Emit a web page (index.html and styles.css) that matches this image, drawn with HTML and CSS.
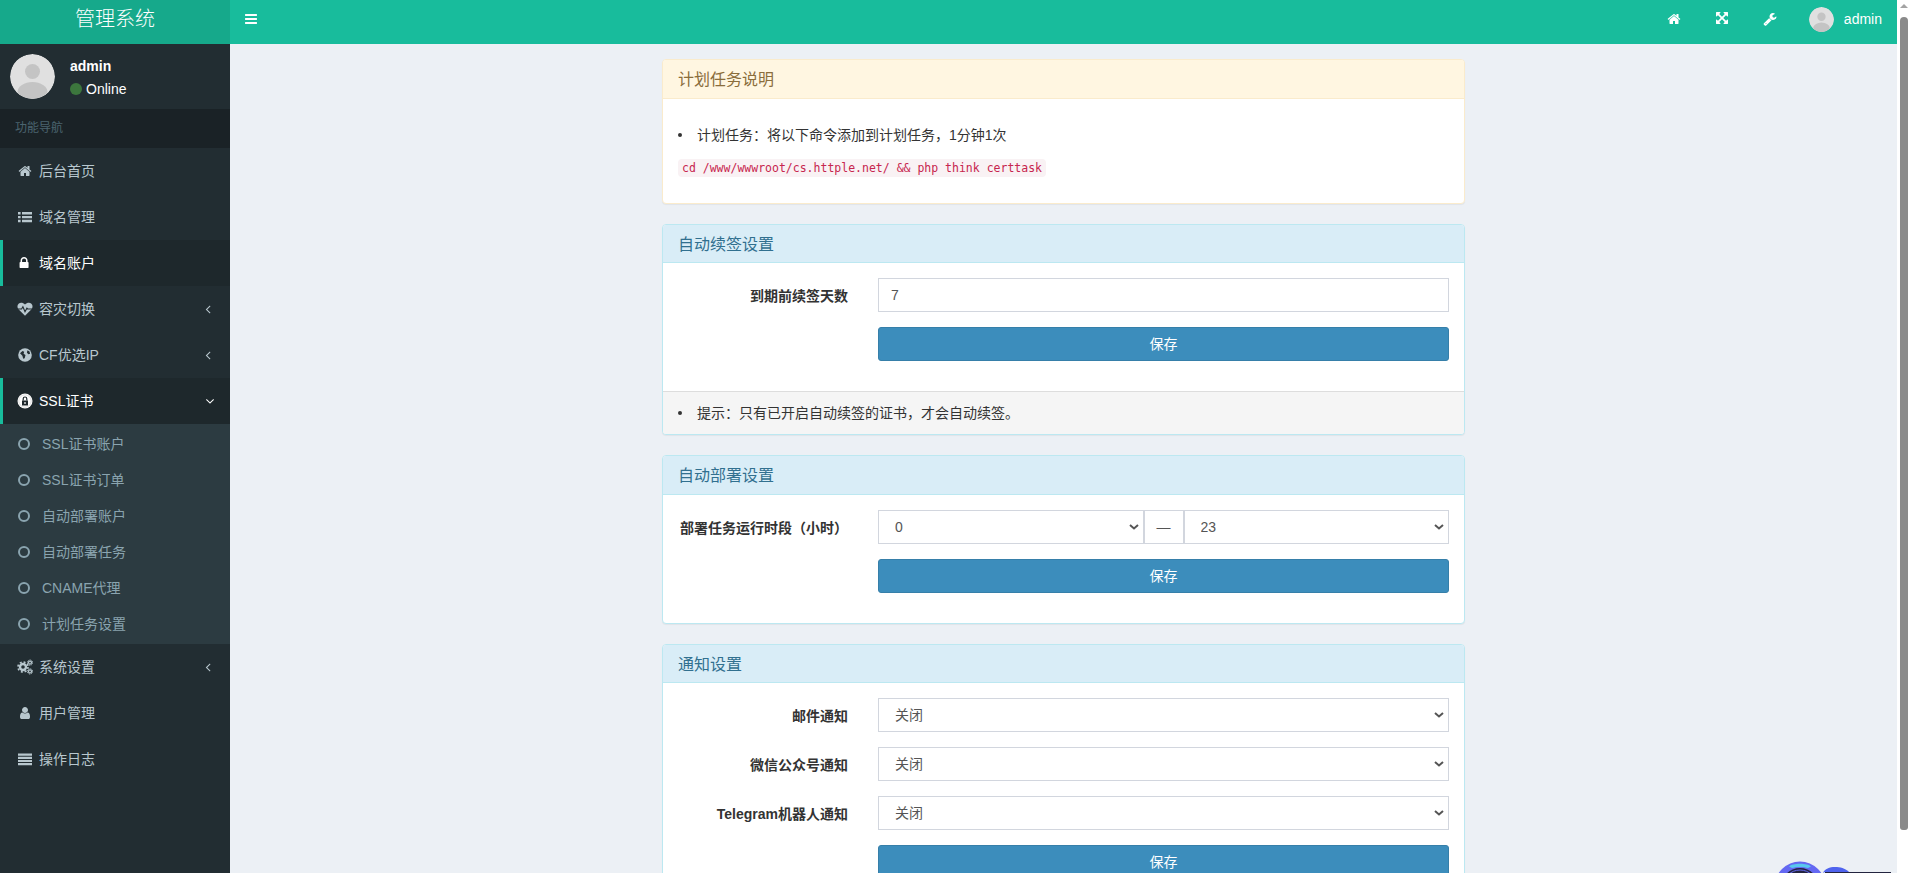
FILE: index.html
```html
<!DOCTYPE html>
<html lang="zh-CN">
<head>
<meta charset="utf-8">
<title>管理系统</title>
<link rel="stylesheet" href="styles.css">
</head>
<body>
<svg class="defs" aria-hidden="true">
  <symbol id="i-home" viewBox="0 0 1792 1792"><path d="M1472 992v480q0 26-19 45t-45 19h-384v-384h-256v384h-384q-26 0-45-19t-19-45v-480q0-1 .5-3t.5-3l575-474 575 474q1 2 1 6zm223-69l-62 74q-8 9-21 11h-3q-13 0-21-7l-692-577-692 577q-12 8-24 7-13-2-21-11l-62-74q-8-10-7-23.5t11-21.5l719-599q32-26 76-26t76 26l244 204v-195q0-14 9-23t23-9h192q14 0 23 9t9 23v408l219 182q10 8 11 21.5t-7 23.5z"/></symbol>
  <symbol id="i-bars" viewBox="0 0 1792 1792"><path d="M1664 1344v128q0 26-19 45t-45 19h-1408q-26 0-45-19t-19-45v-128q0-26 19-45t45-19h1408q26 0 45 19t19 45zm0-512v128q0 26-19 45t-45 19h-1408q-26 0-45-19t-19-45v-128q0-26 19-45t45-19h1408q26 0 45 19t19 45zm0-512v128q0 26-19 45t-45 19h-1408q-26 0-45-19t-19-45v-128q0-26 19-45t45-19h1408q26 0 45 19t19 45z"/></symbol>
  <symbol id="i-list" viewBox="0 0 16 16"><path d="M1 3h2.600v2.400H1zM1 6.900h2.600v2.400H1zM1 10.800h2.600v2.400H1zM5 3h10v2.400H5zM5 6.900h10v2.400H5zM5 10.800h10v2.400H5z"/></symbol>
  <symbol id="i-lines" viewBox="0 0 16 16"><path d="M1 2.500h14v2.200H1zM1 5.700h14v2.200H1zM1 8.900h14v2.200H1zM1 12.100h14v2.200H1z"/></symbol>
  <symbol id="i-lock" viewBox="0 0 1792 1792"><path d="M520 768h512v-192q0-106-75-181t-181-75-181 75-75 181v192zm832 96v576q0 40-28 68t-68 28h-960q-40 0-68-28t-28-68v-576q0-40 28-68t68-28h32v-192q0-184 132-316t316-132 316 132 132 316v192h32q40 0 68 28t28 68z"/></symbol>
  <symbol id="i-user" viewBox="0 0 1792 1792"><path d="M1536 1399q0 109-62.5 187t-150.5 78h-854q-88 0-150.5-78t-62.5-187q0-85 8.5-160.5t31.5-152 58.5-131 94-89 134.5-34.5q131 128 313 128t313-128q76 0 134.5 34.5t94 89 58.5 131 31.5 152 8.5 160.5zm-256-887q0 159-112.5 271.5t-271.5 112.5-271.5-112.5-112.5-271.5 112.5-271.5 271.5-112.5 271.5 112.5 112.5 271.5z"/></symbol>
  <symbol id="i-left" viewBox="0 0 1792 1792"><path d="M1203 544q0 13-10 23l-393 393 393 393q10 10 10 23t-10 23l-50 50q-10 10-23 10t-23-10l-466-466q-10-10-10-23t10-23l466-466q10-10 23-10t23 10l50 50q10 10 10 23z"/></symbol>
  <symbol id="i-down" viewBox="0 0 1792 1792"><path d="M1395 736q0 13-10 23l-466 466q-10 10-23 10t-23-10l-466-466q-10-10-10-23t10-23l50-50q10-10 23-10t23 10l393 393 393-393q10-10 23-10t23 10l50 50q10 10 10 23z"/></symbol>
  <symbol id="i-expand" viewBox="0 0 1792 1792"><path d="M1283 413l-355 355 355 355 144-144q29-31 70-14 39 17 39 59v448q0 26-19 45t-45 19h-448q-42 0-59-40-17-39 14-69l144-144-355-355-355 355 144 144q31 30 14 69-17 40-59 40h-448q-26 0-45-19t-19-45v-448q0-42 40-59 39-17 69 14l144 144 355-355-355-355-144 144q-19 19-45 19-12 0-24-5-40-17-40-59v-448q0-26 19-45t45-19h448q42 0 59 40 17 39-14 69l-144 144 355 355 355-355-144-144q-31-30-14-69 17-40 59-40h448q26 0 45 19t19 45v448q0 42-39 59-13 5-25 5-26 0-45-19z"/></symbol>
  <symbol id="i-wrench" viewBox="0 0 1792 1792"><path d="M448 1472q0-26-19-45t-45-19-45 19-19 45 19 45 45 19 45-19 19-45zm644-420l-682 682q-37 37-90 37-52 0-91-37l-106-108q-38-36-38-90 0-53 38-91l681-681q39 98 114.5 173.5t173.5 114.5zm634-435q0 39-23 106-47 134-164.5 217.5t-258.5 83.5q-185 0-316.5-131.5t-131.5-316.5 131.5-316.5 316.5-131.5q58 0 121.5 16.5t107.5 46.5q16 11 16 28t-16 28l-293 169v224l193 107q5-3 79-48.5t135.5-81 70.5-35.5q15 0 23.5 10t8.5 25z"/></symbol>
</svg>

<div class="window">
  <div class="shell">
    <div class="logo">管理系统</div>
    <header class="topbar">
      <svg class="ico toggle"><use href="#i-bars"/></svg>
      <div class="topnav">
        <svg class="ico"><use href="#i-home"/></svg>
        <svg class="ico ico-expand"><use href="#i-expand"/></svg>
        <svg class="ico"><use href="#i-wrench"/></svg>
        <div class="topuser">
          <svg class="avatar avatar-sm" viewBox="0 0 45 45"><circle cx="22.5" cy="22.5" r="22.5" fill="#e0e0e0"/><circle cx="22.5" cy="17.5" r="7.5" fill="#c4c4c4"/><ellipse cx="22.5" cy="38" rx="15" ry="10" fill="#c4c4c4"/></svg>
          <span>admin</span>
        </div>
      </div>
    </header>

    <aside class="sidebar">
      <div class="userpanel">
        <svg class="avatar avatar-lg" viewBox="0 0 45 45"><defs><clipPath id="ac"><circle cx="22.5" cy="22.5" r="22.5"/></clipPath></defs><circle cx="22.5" cy="22.5" r="22.5" fill="#e0e0e0"/><circle cx="22.5" cy="17.5" r="7.5" fill="#c4c4c4"/><ellipse cx="22.5" cy="38" rx="15" ry="10" fill="#c4c4c4" clip-path="url(#ac)"/></svg>
        <div class="userinfo">
          <strong class="username">admin</strong>
          <div class="status"><i class="dot"></i>Online</div>
        </div>
      </div>
      <div class="navhead">功能导航</div>
      <nav class="menu">
        <a class="item"><svg class="ico"><use href="#i-home"/></svg><span>后台首页</span></a>
        <a class="item"><svg class="ico ico-wide"><use href="#i-list"/></svg><span>域名管理</span></a>
        <a class="item active"><svg class="ico"><use href="#i-lock"/></svg><span>域名账户</span></a>
        <a class="item">
          <svg class="ico ico-wide" viewBox="0 0 16 16"><path fill="currentColor" d="M8 14.800 1.700 8.500C.1 6.900 0 4.200 1.600 2.700 3.200 1.200 6 1.300 8 3.600c2-2.300 4.800-2.400 6.400-.9 1.600 1.500 1.500 4.200-.1 5.800z"/><path class="cut" d="M0 8h4.600l1.300-2.300 2.100 5.100 1.900-3.600.9.800H16"/></svg>
          <span>容灾切换</span><svg class="ico chev"><use href="#i-left"/></svg>
        </a>
        <a class="item">
          <svg class="ico ico-wide" viewBox="0 0 16 16"><circle cx="8" cy="8" r="6.800" fill="currentColor"/><path class="patch" d="M3 6.200 5.500 4l1.700.700-.6 2 1.900 1.300-.8 3.300-1.500.5-.8-3zM10.500 3.200l2 1.200.6 2.400-1.900.4-1.300-1.800z"/></svg>
          <span>CF优选IP</span><svg class="ico chev"><use href="#i-left"/></svg>
        </a>
        <a class="item active">
          <svg class="ico ico-wide" viewBox="0 0 16 16"><circle cx="8" cy="8" r="7.500" fill="#fff"/><circle cx="8" cy="8" r="6.200" fill="none" stroke="#cfcfcf" stroke-width=".7"/><path fill="#1e282c" d="M5 7.500h6V12.500H5z"/><path fill="none" stroke="#1e282c" stroke-width="1.200" d="M6.200 7.500V5.800a1.800 1.800 0 0 1 3.600 0v1.700"/><path fill="#fff" d="M7.400 9h1.200v2H7.400z"/></svg>
          <span>SSL证书</span><svg class="ico chev chev-down"><use href="#i-down"/></svg>
        </a>
        <div class="submenu">
          <a class="subitem"><i class="ring"></i><span>SSL证书账户</span></a>
          <a class="subitem"><i class="ring"></i><span>SSL证书订单</span></a>
          <a class="subitem"><i class="ring"></i><span>自动部署账户</span></a>
          <a class="subitem"><i class="ring"></i><span>自动部署任务</span></a>
          <a class="subitem"><i class="ring"></i><span>CNAME代理</span></a>
          <a class="subitem"><i class="ring"></i><span>计划任务设置</span></a>
        </div>
        <a class="item">
          <svg class="ico ico-wide" viewBox="0 0 16 16"><g fill="none" stroke="currentColor"><circle cx="6" cy="8" r="3" stroke-width="2.400"/><circle cx="6" cy="8" r="5" stroke-width="1.600" stroke-dasharray="2 1.930"/><circle cx="13" cy="3.600" r="1.500" stroke-width="1.300"/><circle cx="13" cy="3.600" r="2.600" stroke-width="1" stroke-dasharray="1.200 .840"/><circle cx="13" cy="12.400" r="1.500" stroke-width="1.300"/><circle cx="13" cy="12.400" r="2.600" stroke-width="1" stroke-dasharray="1.200 .840"/></g></svg>
          <span>系统设置</span><svg class="ico chev"><use href="#i-left"/></svg>
        </a>
        <a class="item"><svg class="ico"><use href="#i-user"/></svg><span>用户管理</span></a>
        <a class="item"><svg class="ico ico-wide"><use href="#i-lines"/></svg><span>操作日志</span></a>
      </nav>
    </aside>

    <main class="content">
      <section class="panel panel-warning">
        <div class="panel-heading">计划任务说明</div>
        <div class="panel-body">
          <ul class="notes notes-top"><li>计划任务：将以下命令添加到计划任务，1分钟1次</li></ul>
          <p class="cmd"><code>cd /www/wwwroot/cs.httple.net/ &amp;&amp; php think certtask</code></p>
        </div>
      </section>

      <section class="panel panel-info">
        <div class="panel-heading">自动续签设置</div>
        <div class="panel-body">
          <div class="field">
            <label class="field-label">到期前续签天数</label>
            <input class="control" type="text" value="7">
          </div>
          <div class="field">
            <span></span>
            <button class="btn" type="button">保存</button>
          </div>
        </div>
        <div class="panel-footer">
          <ul class="notes"><li>提示：只有已开启自动续签的证书，才会自动续签。</li></ul>
        </div>
      </section>

      <section class="panel panel-info">
        <div class="panel-heading">自动部署设置</div>
        <div class="panel-body">
          <div class="field">
            <label class="field-label">部署任务运行时段（小时）</label>
            <div class="range">
              <select class="control select"><option selected>0</option><option>1</option><option>2</option><option>3</option><option>4</option><option>5</option><option>6</option><option>7</option><option>8</option><option>9</option><option>10</option><option>11</option><option>12</option><option>13</option><option>14</option><option>15</option><option>16</option><option>17</option><option>18</option><option>19</option><option>20</option><option>21</option><option>22</option><option>23</option></select>
              <span class="range-sep">—</span>
              <select class="control select"><option>0</option><option>1</option><option>2</option><option>3</option><option>4</option><option>5</option><option>6</option><option>7</option><option>8</option><option>9</option><option>10</option><option>11</option><option>12</option><option>13</option><option>14</option><option>15</option><option>16</option><option>17</option><option>18</option><option>19</option><option>20</option><option>21</option><option>22</option><option selected>23</option></select>
            </div>
          </div>
          <div class="field">
            <span></span>
            <button class="btn" type="button">保存</button>
          </div>
        </div>
      </section>

      <section class="panel panel-info">
        <div class="panel-heading">通知设置</div>
        <div class="panel-body">
          <div class="field">
            <label class="field-label">邮件通知</label>
            <select class="control select"><option>关闭</option><option>开启</option></select>
          </div>
          <div class="field">
            <label class="field-label">微信公众号通知</label>
            <select class="control select"><option>关闭</option><option>开启</option></select>
          </div>
          <div class="field">
            <label class="field-label">Telegram机器人通知</label>
            <select class="control select"><option>关闭</option><option>开启</option></select>
          </div>
          <div class="field">
            <span></span>
            <button class="btn" type="button">保存</button>
          </div>
        </div>
      </section>

      <svg class="widget" viewBox="0 0 116 12" aria-hidden="true">
        <path fill="#23243f" d="M50 11h66v1H50z"/>
        <path fill="#4f63ee" d="M48 12c2-5 8-6.500 14-6 5 .4 10 2.600 12 5H50z"/>
        <circle cx="25" cy="26" r="25.500" fill="#6468f2"/>
        <path fill="#58c8ee" d="M14 5.500C17 1.800 33 1.800 36 5.500L33 7C29 5.500 21 5.500 17 7z"/>
        <circle cx="25" cy="26" r="19" fill="#23243f"/>
        <circle cx="25" cy="26" r="17" fill="none" stroke="#6468f2"/>
      </svg>
    </main>
  </div>
  <div class="scrollbar">
    <i class="scroll-up"></i>
    <i class="scroll-thumb"></i>
  </div>
</div>
</body>
</html>
```

FILE: styles.css
```css
* { box-sizing: border-box; }

html, body {
  margin: 0;
  height: 100%;
  overflow: hidden;
}

body {
  font-family: "Liberation Sans", "Noto Sans CJK SC", sans-serif;
  font-size: 14px;
  line-height: 20px;
  color: #333;
  background: #ecf0f5;
}

.defs { display: none; }

.window {
  display: flex;
  height: 100vh;
}

.shell {
  flex: 1;
  min-width: 0;
  display: grid;
  grid-template-columns: 230px 1fr;
  grid-template-rows: 44px 1fr;
}

/* Header */
.logo {
  background: #16a98b;
  color: #fff;
  font-size: 20px;
  font-weight: 300;
  line-height: 38px;
  text-align: center;
}

.topbar {
  background: #18bc9c;
  color: #fff;
  display: flex;
  align-items: center;
  justify-content: space-between;
  padding: 0 15px 0 14px;
}

.ico {
  flex: none;
  width: 14px;
  height: 14px;
  fill: currentColor;
}

.toggle { margin-top: -6px; }

.topnav {
  display: flex;
  align-items: center;
  gap: 34px;
  margin-top: -6px;
}

.ico-expand { transform: translateX(1px); }

.topuser {
  display: flex;
  align-items: center;
  gap: 10px;
  margin-left: -2px;
}

.avatar { display: block; border-radius: 50%; }
.avatar-sm { width: 25px; height: 25px; }
.avatar-lg { width: 45px; height: 45px; }

/* Sidebar */
.sidebar {
  background: #222d32;
  color: #b8c7ce;
}

.userpanel {
  height: 65px;
  padding: 10px;
  display: flex;
  gap: 15px;
}

.userinfo {
  color: #fff;
  padding-top: 2px;
}

.username {
  display: block;
  line-height: 20px;
}

.status {
  display: flex;
  align-items: center;
  gap: 4px;
  margin-top: 3px;
}

.dot {
  width: 12px;
  height: 12px;
  border-radius: 50%;
  background: #3c763d;
}

.navhead {
  height: 39px;
  padding: 9px 15px;
  background: #1a2226;
  color: #4b646f;
  font-size: 12px;
}

.item {
  height: 46px;
  display: flex;
  align-items: center;
  gap: 7px;
  padding: 0 15px;
  border-left: 3px solid transparent;
  color: #b8c7ce;
}

.item .ico { margin-top: -1px; }

.item .ico-wide {
  width: 16px;
  height: 16px;
  margin-left: -1px;
  margin-right: -1px;
}

.item.active {
  background: #1e282c;
  border-left-color: #18bc9c;
  color: #fff;
}

.chev {
  margin-left: auto;
}

.chev-down { margin-right: -2px; }

.cut {
  fill: none;
  stroke: #222d32;
  stroke-width: 1.1;
}

.patch { fill: #222d32; }

.submenu {
  background: #2c3b41;
  padding: 2px 0;
}

.subitem {
  height: 36px;
  display: flex;
  align-items: center;
  gap: 12px;
  padding-left: 18px;
  color: #8aa4af;
}

.ring {
  width: 12px;
  height: 12px;
  border: 2px solid #8aa4af;
  border-radius: 50%;
}

/* Content */
.content {
  position: relative;
  overflow: hidden;
  padding: 15px 0 0;
}

.panel {
  width: 803px;
  margin: 0 auto 20px;
  background: #fff;
  border: 1px solid transparent;
  border-radius: 4px;
  box-shadow: 0 1px 1px rgba(0, 0, 0, .05);
}

.panel-heading {
  padding: 11px 15px 9px;
  font-size: 16px;
  line-height: 17.6px;
  border-bottom: 1px solid transparent;
  border-radius: 3px 3px 0 0;
}

.panel-warning { border-color: #faebcc; }
.panel-warning .panel-heading {
  background: #fff6e1;
  border-bottom-color: #faebcc;
  color: #8a6d3b;
}

.panel-info { border-color: #bce8f1; }
.panel-info .panel-heading {
  background: #d9edf7;
  border-bottom-color: #bce8f1;
  color: #31708f;
}

.panel-body { padding: 15px; }

.panel-footer {
  padding: 10px 15px;
  background: #f5f5f5;
  border-top: 1px solid #ddd;
  border-radius: 0 0 3px 3px;
}

.notes {
  margin: 0;
  padding: 0;
  list-style: none;
  line-height: 22px;
}

.notes li {
  display: flex;
  align-items: center;
}

.notes li::before {
  content: "";
  flex: none;
  width: 4px;
  height: 4px;
  margin-right: 15px;
  border-radius: 50%;
  background: #333;
}

.notes-top { margin: 10px 0 11px; }

.cmd { margin: 0 0 10px; }

code {
  font-family: "DejaVu Sans Mono", monospace;
  font-size: 11.5px;
  padding: 2px 4px;
  color: #c7254e;
  background: #f9f2f4;
  border-radius: 4px;
}

.field {
  display: grid;
  grid-template-columns: 170px 1fr;
  column-gap: 30px;
  margin-bottom: 15px;
}

.field-label {
  padding-top: 8px;
  font-weight: 700;
  text-align: right;
}

.control {
  display: block;
  width: 100%;
  height: 34px;
  padding: 6px 12px;
  font: inherit;
  color: #555;
  background-color: #fff;
  border: 1px solid #d2d6de;
  border-radius: 0;
  outline: none;
}

.select {
  appearance: none;
  padding-left: 16px;
  background-image: url("data:image/svg+xml,%3Csvg xmlns='http://www.w3.org/2000/svg' width='10' height='6'%3E%3Cpath d='M1 1l4 3.500 4-3.500' fill='none' stroke='%23555' stroke-width='2'/%3E%3C/svg%3E");
  background-repeat: no-repeat;
  background-position: right 4px center;
}

.range {
  display: flex;
}

.range .select {
  flex: 1;
  min-width: 0;
}

.range-sep {
  flex: none;
  width: 42px;
  height: 34px;
  line-height: 32px;
  text-align: center;
  color: #555;
  border: 1px solid #d2d6de;
  border-left-width: 2px;
  border-right-width: 2px;
  margin: 0 -1px;
  position: relative;
}

.btn {
  display: block;
  width: 100%;
  height: 34px;
  font: inherit;
  color: #fff;
  background: #3c8dbc;
  border: 1px solid #367fa9;
  border-radius: 3px;
}

/* Overlay widget */
.widget {
  position: absolute;
  right: 6px;
  bottom: 0;
  width: 116px;
  height: 12px;
}

/* Window scrollbar */
.scrollbar {
  flex: none;
  width: 11px;
  background: #fff;
  position: relative;
}

.scroll-up {
  position: absolute;
  top: 4px;
  left: 3px;
  border-left: 4px solid transparent;
  border-right: 4px solid transparent;
  border-bottom: 4px solid #a3a3a3;
}

.scroll-thumb {
  position: absolute;
  top: 17px;
  left: 3px;
  right: 0;
  height: 813px;
  background: #8a8a8a;
  border-radius: 4px 4px 3px 3px;
}
```
